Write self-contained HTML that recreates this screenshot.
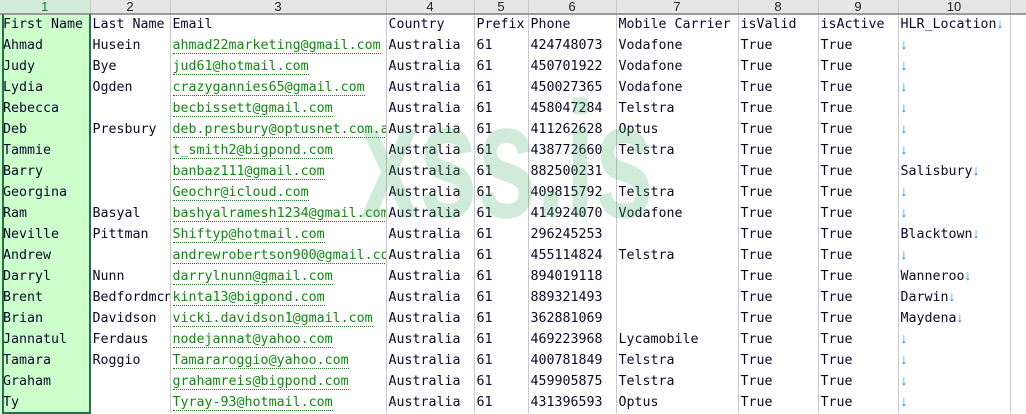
<!DOCTYPE html>
<html><head><meta charset="utf-8"><style>
*{margin:0;padding:0;box-sizing:border-box}
body{width:1026px;height:412px;overflow:hidden;background:#fff;font-family:"DejaVu Sans Mono","Liberation Mono",monospace;font-size:13.3px;color:#0a0a28;position:relative}
table{border-collapse:collapse;table-layout:fixed;position:absolute;left:0;top:0;width:1026px}
tr{height:21px}
td{height:21px;max-height:21px;padding:0 0 0 2px;white-space:nowrap;overflow:hidden;border-right:1px solid #c8c8c8;line-height:20px;vertical-align:middle}
tr.h{height:14px}
tr.h td{height:14px;line-height:12px;background:#e6e6e6;text-align:center;border-bottom:2px solid #9a9a9a;color:#222;padding:0;font-family:"Liberation Sans",sans-serif;font-size:13px}
tr.h td.c1{background:#d2ecd9;color:#1e7a3e}
td.c1{background:#ccffcc;padding-left:3px}
td.e{color:#108a10}
td.e span{border-bottom:1px dotted #108a10}
.a{color:#1e88e5;font-family:"Liberation Sans",sans-serif;font-size:14px;line-height:1}
.sel{position:absolute;left:2px;top:14px;width:89px;height:400px;border:2px solid #217346;border-top:none}
.wm{position:absolute;left:360px;top:78px;font-family:"Liberation Sans",sans-serif;font-weight:bold;font-size:165px;color:rgba(60,170,90,0.24);line-height:1;transform:scaleX(0.64);transform-origin:0 0;white-space:nowrap}
</style></head><body>
<table>
<colgroup><col style="width:90px"><col style="width:80px"><col style="width:216px"><col style="width:88px"><col style="width:54px"><col style="width:88px"><col style="width:122px"><col style="width:80px"><col style="width:80px"><col style="width:112px"><col style="width:16px"></colgroup>
<tr class="h"><td class="c1">1</td><td>2</td><td>3</td><td>4</td><td>5</td><td>6</td><td>7</td><td>8</td><td>9</td><td>10</td><td></td></tr>
<tr><td class="c1">First Name</td><td>Last Name</td><td>Email</td><td>Country</td><td>Prefix</td><td>Phone</td><td>Mobile Carrier</td><td>isValid</td><td>isActive</td><td>HLR_Location<span class="a">↓</span></td><td></td></tr>
<tr><td class="c1">Ahmad</td><td>Husein</td><td class="e"><span>ahmad22marketing@gmail.com</span></td><td>Australia</td><td>61</td><td>424748073</td><td>Vodafone</td><td>True</td><td>True</td><td><span class="a">↓</span></td><td></td></tr>
<tr><td class="c1">Judy</td><td>Bye</td><td class="e"><span>jud61@hotmail.com</span></td><td>Australia</td><td>61</td><td>450701922</td><td>Vodafone</td><td>True</td><td>True</td><td><span class="a">↓</span></td><td></td></tr>
<tr><td class="c1">Lydia</td><td>Ogden</td><td class="e"><span>crazygannies65@gmail.com</span></td><td>Australia</td><td>61</td><td>450027365</td><td>Vodafone</td><td>True</td><td>True</td><td><span class="a">↓</span></td><td></td></tr>
<tr><td class="c1">Rebecca</td><td></td><td class="e"><span>becbissett@gmail.com</span></td><td>Australia</td><td>61</td><td>458047284</td><td>Telstra</td><td>True</td><td>True</td><td><span class="a">↓</span></td><td></td></tr>
<tr><td class="c1">Deb</td><td>Presbury</td><td class="e"><span>deb.presbury@optusnet.com.a</span></td><td>Australia</td><td>61</td><td>411262628</td><td>Optus</td><td>True</td><td>True</td><td><span class="a">↓</span></td><td></td></tr>
<tr><td class="c1">Tammie</td><td></td><td class="e"><span>t_smith2@bigpond.com</span></td><td>Australia</td><td>61</td><td>438772660</td><td>Telstra</td><td>True</td><td>True</td><td><span class="a">↓</span></td><td></td></tr>
<tr><td class="c1">Barry</td><td></td><td class="e"><span>banbaz111@gmail.com</span></td><td>Australia</td><td>61</td><td>882500231</td><td></td><td>True</td><td>True</td><td>Salisbury<span class="a">↓</span></td><td></td></tr>
<tr><td class="c1">Georgina</td><td></td><td class="e"><span>Geochr@icloud.com</span></td><td>Australia</td><td>61</td><td>409815792</td><td>Telstra</td><td>True</td><td>True</td><td><span class="a">↓</span></td><td></td></tr>
<tr><td class="c1">Ram</td><td>Basyal</td><td class="e"><span>bashyalramesh1234@gmail.com</span></td><td>Australia</td><td>61</td><td>414924070</td><td>Vodafone</td><td>True</td><td>True</td><td><span class="a">↓</span></td><td></td></tr>
<tr><td class="c1">Neville</td><td>Pittman</td><td class="e"><span>Shiftyp@hotmail.com</span></td><td>Australia</td><td>61</td><td>296245253</td><td></td><td>True</td><td>True</td><td>Blacktown<span class="a">↓</span></td><td></td></tr>
<tr><td class="c1">Andrew</td><td></td><td class="e"><span>andrewrobertson900@gmail.com</span></td><td>Australia</td><td>61</td><td>455114824</td><td>Telstra</td><td>True</td><td>True</td><td><span class="a">↓</span></td><td></td></tr>
<tr><td class="c1">Darryl</td><td>Nunn</td><td class="e"><span>darrylnunn@gmail.com</span></td><td>Australia</td><td>61</td><td>894019118</td><td></td><td>True</td><td>True</td><td>Wanneroo<span class="a">↓</span></td><td></td></tr>
<tr><td class="c1">Brent</td><td>Bedfordmcn</td><td class="e"><span>kinta13@bigpond.com</span></td><td>Australia</td><td>61</td><td>889321493</td><td></td><td>True</td><td>True</td><td>Darwin<span class="a">↓</span></td><td></td></tr>
<tr><td class="c1">Brian</td><td>Davidson</td><td class="e"><span>vicki.davidson1@gmail.com</span></td><td>Australia</td><td>61</td><td>362881069</td><td></td><td>True</td><td>True</td><td>Maydena<span class="a">↓</span></td><td></td></tr>
<tr><td class="c1">Jannatul</td><td>Ferdaus</td><td class="e"><span>nodejannat@yahoo.com</span></td><td>Australia</td><td>61</td><td>469223968</td><td>Lycamobile</td><td>True</td><td>True</td><td><span class="a">↓</span></td><td></td></tr>
<tr><td class="c1">Tamara</td><td>Roggio</td><td class="e"><span>Tamararoggio@yahoo.com</span></td><td>Australia</td><td>61</td><td>400781849</td><td>Telstra</td><td>True</td><td>True</td><td><span class="a">↓</span></td><td></td></tr>
<tr><td class="c1">Graham</td><td></td><td class="e"><span>grahamreis@bigpond.com</span></td><td>Australia</td><td>61</td><td>459905875</td><td>Telstra</td><td>True</td><td>True</td><td><span class="a">↓</span></td><td></td></tr>
<tr><td class="c1">Ty</td><td></td><td class="e"><span>Tyray-93@hotmail.com</span></td><td>Australia</td><td>61</td><td>431396593</td><td>Optus</td><td>True</td><td>True</td><td><span class="a">↓</span></td><td></td></tr>
</table>
<div class="sel"></div>
<div class="wm">xss.is</div>
</body></html>
